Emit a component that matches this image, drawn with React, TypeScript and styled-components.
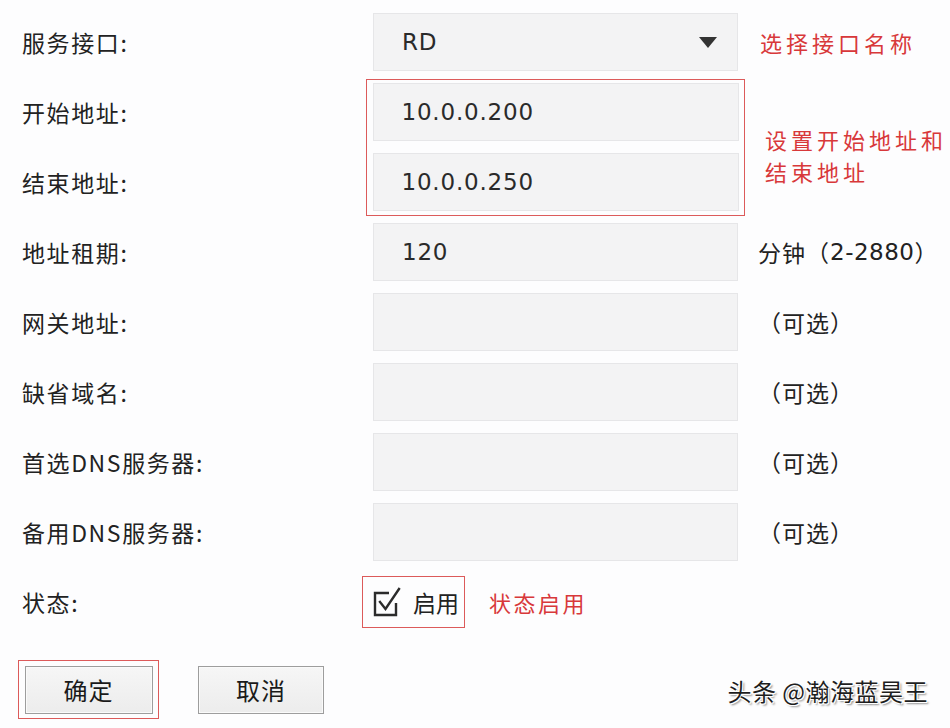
import React from 'react';
import styled, { createGlobalStyle } from 'styled-components';

const GlobalStyle = createGlobalStyle`
  html, body {
    margin: 0;
    padding: 0;
    background: #fdfdfe;
  }
  body {
    font-family: "Noto Sans CJK SC", "Noto Sans", sans-serif;
    color: #222;
  }
`;

const Page = styled.div`
  position: relative;
  width: 950px;
  height: 728px;
  overflow: hidden;
  padding-top: 13px;
  box-sizing: border-box;
`;

const FormGrid = styled.div`
  margin-left: 22px;
  display: grid;
  grid-template-columns: 351px 365px 1fr;
  grid-auto-rows: 58px;
  row-gap: 12px;
`;

const Label = styled.div<{ $row: number }>`
  grid-column: 1;
  grid-row: ${p => p.$row};
  display: flex;
  align-items: center;
  font-size: 23px;
  letter-spacing: 1.6px;
  color: #222;
`;

const Field = styled.div`
  height: 58px;
  box-sizing: border-box;
  background: #f3f3f4;
  border: 1px solid #e6e6e8;
  display: flex;
  align-items: center;
  padding: 0 28px;
  font-family: "DejaVu Sans", "Noto Sans CJK SC", sans-serif;
  font-size: 23px;
  letter-spacing: 0.8px;
  color: #2a2a2a;
`;

const Cell = styled.div<{ $row: number }>`
  grid-column: 2;
  grid-row: ${p => p.$row};
`;

const SelectField = styled(Field)`
  justify-content: space-between;
  padding-right: 20px;
`;

const Caret = styled.span`
  width: 0;
  height: 0;
  border-left: 9px solid transparent;
  border-right: 9px solid transparent;
  border-top: 11px solid #333;
`;

const Highlight = styled.div`
  grid-column: 2;
  grid-row: 2 / span 2;
  margin: -4px -7px -5px -7px;
  border: 1.5px solid #dc5a5a;
  padding: 2.5px 5.5px 3.5px;
  display: flex;
  flex-direction: column;
  gap: 12px;
`;

const Hint = styled.div<{ $row: number; $span?: number; $red?: boolean; $indent?: number }>`
  grid-column: 3;
  grid-row: ${p => p.$row} / span ${p => p.$span || 1};
  margin-left: ${p => (p.$red ? 22 : 20) + (p.$indent || 0)}px;
  display: flex;
  align-items: center;
  font-size: ${p => (p.$red ? 22 : 23)}px;
  letter-spacing: ${p => (p.$red ? 4 : 1)}px;
  line-height: 32px;
  color: ${p => (p.$red ? '#d8383a' : '#222')};
  white-space: nowrap;
`;

const Num = styled.span`
  font-family: "DejaVu Sans", sans-serif;
  letter-spacing: 0.5px;
`;

const StatusCell = styled.div`
  grid-column: 2 / span 2;
  grid-row: 9;
  display: flex;
  align-items: center;
  gap: 24px;
`;

const CheckWrap = styled.label`
  margin-left: -11px;
  height: 52px;
  box-sizing: border-box;
  border: 1.5px solid #dc5a5a;
  padding: 0 5px 0 10px;
  display: flex;
  align-items: center;
  gap: 12px;
  font-size: 23px;
  color: #222;
`;

const RedNote = styled.span`
  font-size: 22px;
  letter-spacing: 2.5px;
  color: #d8383a;
`;

const ButtonRow = styled.div`
  margin-top: 29px;
  padding-left: 18px;
  display: flex;
  align-items: center;
  gap: 39px;
`;

const Outline = styled.div`
  border: 1.5px solid #dc5a5a;
  padding: 4.5px 5.5px;
`;

const Button = styled.button<{ $w: number }>`
  width: ${p => p.$w}px;
  height: 48px;
  background: linear-gradient(#f6f6f6, #ececec);
  border: 1px solid #9d9d9d;
  box-shadow: inset 0 0 0 1px #fafafa;
  font-family: "Noto Sans CJK SC", sans-serif;
  font-size: 24px;
  letter-spacing: 1px;
  color: #1a1a1a;
  padding: 0;
`;

const Watermark = styled.div`
  position: absolute;
  right: 22px;
  bottom: 20px;
  font-size: 24px;
  color: #1e1e1e;
  letter-spacing: 0.5px;
  text-shadow: 1px 1px 0 #fff, -1px -1px 0 #fff, 1px -1px 0 #fff, -1px 1px 0 #fff,
    2px 2px 2px rgba(0, 0, 0, 0.45);
`;

const CheckIcon = () => (
  <svg width="28" height="30" viewBox="0 0 28 30" fill="none" stroke="#2b2b2b" strokeWidth="2.4">
    <path d="M16 6 H2 V28 H23 V16" />
    <path d="M7 15 L12.5 22 L26 2" strokeLinecap="square" />
  </svg>
);

const rows = [
  { label: '服务接口:' },
  { label: '开始地址:' },
  { label: '结束地址:' },
  { label: '地址租期:' },
  { label: '网关地址:' },
  { label: '缺省域名:' },
  { label: '首选DNS服务器:' },
  { label: '备用DNS服务器:' },
  { label: '状态:' },
];

export default function App() {
  return (
    <Page>
      <GlobalStyle />
      <FormGrid>
        {rows.map((r, i) => (
          <Label key={r.label} $row={i + 1}>{r.label}</Label>
        ))}

        <Cell $row={1}>
          <SelectField>
            <span>RD</span>
            <Caret />
          </SelectField>
        </Cell>
        <Hint $row={1} $red>选择接口名称</Hint>

        <Highlight>
          <Field>10.0.0.200</Field>
          <Field>10.0.0.250</Field>
        </Highlight>
        <Hint $row={2} $span={2} $red $indent={5} style={{ paddingTop: 16 }}>
          设置开始地址和<br />结束地址
        </Hint>

        <Cell $row={4}><Field>120</Field></Cell>
        <Hint $row={4}>分钟（<Num>2-2880</Num>）</Hint>

        {[5, 6, 7, 8].map(r => (
          <React.Fragment key={r}>
            <Cell $row={r}><Field /></Cell>
            <Hint $row={r}>（可选）</Hint>
          </React.Fragment>
        ))}

        <StatusCell>
          <CheckWrap>
            <CheckIcon />
            启用
          </CheckWrap>
          <RedNote>状态启用</RedNote>
        </StatusCell>
      </FormGrid>

      <ButtonRow>
        <Outline>
          <Button $w={128}>确定</Button>
        </Outline>
        <Button $w={126}>取消</Button>
      </ButtonRow>

      <Watermark>头条 @瀚海蓝昊王</Watermark>
    </Page>
  );
}
